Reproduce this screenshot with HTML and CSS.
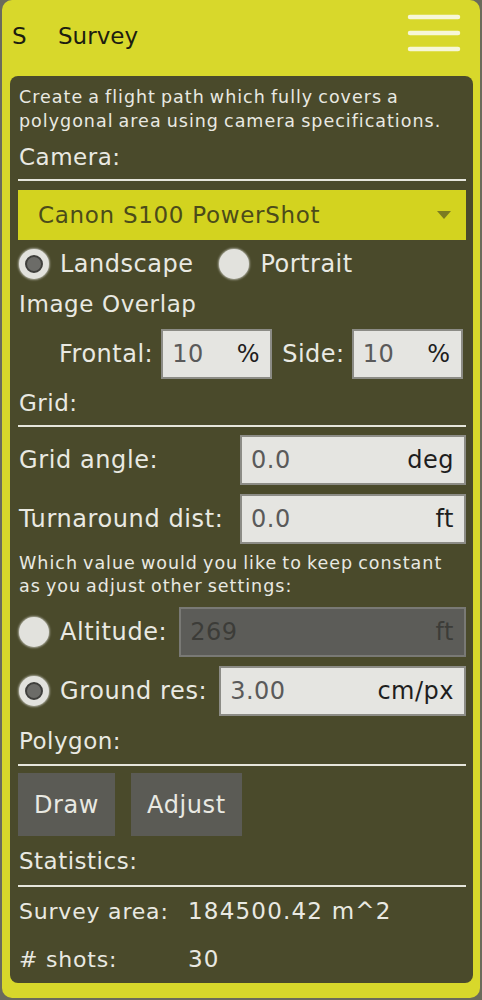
FILE: index.html
```html
<!DOCTYPE html>
<html>
<head>
<meta charset="utf-8">
<link rel="stylesheet" href="styles.css">
</head>
<body>
<div class="app">
  <header class="header">
    <span class="h-s">S</span>
    <span class="h-title">Survey</span>
    <svg class="menu" width="56" height="44" viewBox="0 0 56 44">
      <g stroke="#f7f7d8" stroke-width="4.5" stroke-linecap="round">
        <line x1="4" y1="6" x2="52" y2="6"/>
        <line x1="4" y1="22" x2="52" y2="22"/>
        <line x1="4" y1="38" x2="52" y2="38"/>
      </g>
    </svg>
  </header>
  <main class="panel">
    <p class="desc">Create a flight path which fully covers a polygonal area using camera specifications.</p>
    <div class="section">Camera:</div>
    <div class="select">
      <span>Canon S100 PowerShot</span>
      <svg class="arrow" width="14" height="8" viewBox="0 0 14 8"><path d="M0 0 H14 L7 8 Z" fill="#7b7b22"/></svg>
    </div>
    <div class="radio-row">
      <span class="radio checked"></span><span class="rlabel">Landscape</span>
      <span class="radio second"></span><span class="rlabel">Portrait</span>
    </div>
    <div class="subhead">Image Overlap</div>
    <div class="overlap">
      <span class="olabel">Frontal:</span>
      <div class="field small"><span class="val">10</span><span class="unit">%</span></div>
      <span class="olabel side">Side:</span>
      <div class="field small"><span class="val">10</span><span class="unit">%</span></div>
    </div>
    <div class="section">Grid:</div>
    <div class="frow">
      <span class="flabel">Grid angle:</span>
      <div class="field wide"><span class="val">0.0</span><span class="unit">deg</span></div>
    </div>
    <div class="frow">
      <span class="flabel">Turnaround dist:</span>
      <div class="field wide"><span class="val">0.0</span><span class="unit">ft</span></div>
    </div>
    <p class="desc note">Which value would you like to keep constant as you adjust other settings:</p>
    <div class="frow">
      <span class="radio"></span>
      <span class="flabel r">Altitude:</span>
      <div class="field grow disabled"><span class="val">269</span><span class="unit">ft</span></div>
    </div>
    <div class="frow">
      <span class="radio checked"></span>
      <span class="flabel r">Ground res:</span>
      <div class="field grow"><span class="val">3.00</span><span class="unit">cm/px</span></div>
    </div>
    <div class="section polygon">Polygon:</div>
    <div class="buttons">
      <button class="btn">Draw</button>
      <button class="btn">Adjust</button>
    </div>
    <div class="section stats">Statistics:</div>
    <div class="stat"><span class="skey">Survey area:</span><span class="sval">184500.42 m^2</span></div>
    <div class="stat"><span class="skey"># shots:</span><span class="sval">30</span></div>
  </main>
</div>
</body>
</html>
```

FILE: styles.css
```css
* { box-sizing: border-box; }
html, body { margin: 0; padding: 0; }
body {
  background: #6b6b5c;
  font-family: "DejaVu Sans", "Liberation Sans", sans-serif;
  width: 482px;
  height: 1000px;
  overflow: hidden;
}
.app {
  margin: 0 2px;
  height: 998px;
  background: #d8d82b;
  border-radius: 10px;
  display: flex;
  flex-direction: column;
}
.header {
  height: 76px;
  display: flex;
  align-items: center;
  padding: 0 0 4px 10px;
  color: #1d1d10;
  font-size: 23px;
}
.h-s { width: 46px; }
.h-title { flex: 1; }
.menu { margin-right: 18px; margin-top: -7px; }
.panel {
  margin: 0 7px 0 8px;
  background: #4a4a2b;
  border-radius: 8px;
  padding: 9px 7px 0 8px;
  height: 907px;
  color: #e9e9e2;
}
.desc {
  margin: 0;
  font-size: 17.5px;
  line-height: 24px;
  padding-left: 1px;
  letter-spacing: 1px;
  word-spacing: -1.5px;
}
.note { margin-top: 8px; line-height: 23px; }
.section {
  font-size: 23px;
  letter-spacing: 0.5px;
  line-height: 30px;
  padding: 9px 0 7px 1px;
  border-bottom: 2px solid #e6e6dc;
}
.select {
  margin-top: 9px;
  height: 50px;
  background: #d3d31f;
  display: flex;
  align-items: center;
  justify-content: space-between;
  padding: 0 15px 0 20px;
  color: #4b4b1a;
  font-size: 23px;
  letter-spacing: 0.7px;
}
.radio-row {
  height: 48px;
  display: flex;
  align-items: center;
  font-size: 24px;
  letter-spacing: 0.5px;
  padding-left: 1px;
}
.radio {
  width: 30px;
  height: 30px;
  border-radius: 50%;
  background: #e2e2dd;
  box-shadow: 0 0 2px 1px rgba(255,255,255,0.5);
  flex: none;
  display: flex;
  align-items: center;
  justify-content: center;
}
.radio.checked::after {
  content: "";
  width: 14px;
  height: 14px;
  border-radius: 50%;
  background: #6c6c68;
  border: 2px solid #3f3f3c;
}
.radio.second { margin-left: 26px; }
.rlabel { margin-left: 11px; }
.subhead {
  font-size: 23px;
  letter-spacing: 0.6px;
  line-height: 32px;
  padding-left: 1px;
}
.overlap {
  margin-top: 9px;
  display: flex;
  align-items: center;
  padding-left: 41px;
  font-size: 24px;
  letter-spacing: 0.5px;
}
.olabel { margin-right: 8px; }
.olabel.side { margin-left: 10px; margin-right: 7px; }
.field {
  height: 50px;
  background: #e5e5e1;
  border: 2px solid #8c8c86;
  display: flex;
  align-items: center;
  justify-content: space-between;
  padding: 0 10px 0 9px;
  font-size: 24px;
  letter-spacing: 0.5px;
}
.field .val { color: #5a5a5a; }
.field .unit { color: #1e1e1e; }
.field.small { width: 111px; }
.field.wide { width: 226px; margin-left: auto; }
.field.grow { flex: 1; margin-left: 12px; }
.field.disabled { background: #5c5c58; border-color: #797975; }
.field.disabled .val, .field.disabled .unit { color: #3c3c38; }
.frow {
  margin-top: 8px;
  display: flex;
  align-items: center;
  font-size: 24px;
  letter-spacing: 0.6px;
  padding-left: 1px;
}
.note + .frow { margin-top: 9px; }
.frow + .frow { margin-top: 9px; }
.flabel.r { margin-left: 11px; }
.section.polygon { padding-top: 10px; padding-bottom: 8px; }
.buttons {
  margin-top: 7px;
  display: flex;
  gap: 16px;
}
.btn {
  height: 63px;
  background: #5b5b55;
  border: none;
  color: #e9e9e2;
  font-family: inherit;
  font-size: 24px;
  letter-spacing: 0.6px;
  padding: 0 16px;
}
.section.stats { padding-top: 10px; padding-bottom: 9px; }
.stat {
  height: 48px;
  display: flex;
  align-items: center;
  font-size: 22px;
  letter-spacing: 0.8px;
  padding-left: 1px;
}
.skey { width: 169px; }
.sval { font-size: 23px; letter-spacing: 1.2px; }
```
